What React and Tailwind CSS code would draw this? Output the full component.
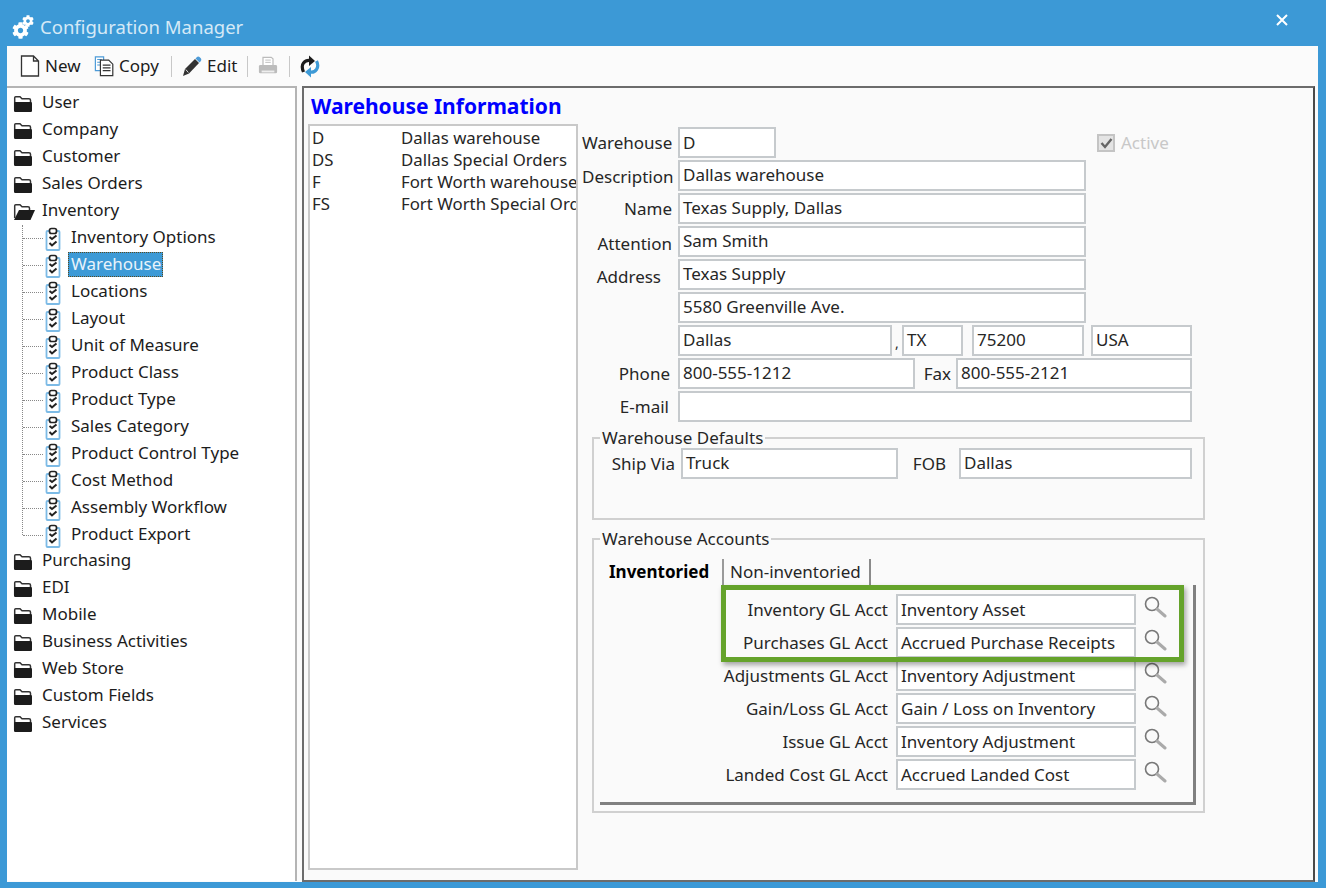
import React from "react";
import { FaCog } from "react-icons/fa";

const FolderIcon = () => (
    <svg width="20" height="18" viewBox="0 0 20 18" className="shrink-0">
        <path d="M1.700 15V2.800q0-1 1-1h4.300l2 2h7q1.500 0 1.500 1.500V8" fill="#fff" stroke="#333" strokeWidth="1.500" />
        <rect x="1" y="7" width="18" height="10" rx="1.200" fill="#1c1c1c" />
    </svg>
)

const FolderOpenIcon = () => (
    <svg width="23" height="18" viewBox="0 0 23 18" className="shrink-0">
        <path d="M1.700 15V2.800q0-1 1-1h4.300l2 2h6q1.500 0 1.500 1.500V8" fill="#fff" stroke="#333" strokeWidth="1.500" />
        <path d="M6 7h16l-4.500 10H1z" fill="#1c1c1c" />
    </svg>
)

const TaskIcon = () => (
    <svg width="16" height="24" viewBox="0 0 16 24" className="shrink-0">
        <rect x="1.500" y="4" width="13" height="19" rx="1" fill="#fff" stroke="#7dbbe6" strokeWidth="1.800" />
        <rect x="4.500" y="1.500" width="7" height="5" rx="2" fill="#fff" stroke="#222" strokeWidth="1.700" />
        <path d="M4.500 10l2.500 2 4.500-3.500M4.500 16l2.500 2.500 4.500-4" fill="none" stroke="#222" strokeWidth="2" />
    </svg>
)

const SearchIcon = () => (
    <svg width="24" height="24" viewBox="0 0 24 24">
        <circle cx="9" cy="9" r="6.500" fill="none" stroke="#777" strokeWidth="1.600" />
        <path d="M14 14l8 7" stroke="#aaa" strokeWidth="3" strokeLinecap="round" />
    </svg>
)

const Sep = () => <span className="block w-px h-[21px] bg-[#c8c8c8]"></span>

const Toolbar = () => (
    <div className="h-10 flex items-center pl-[13px] text-[17px] text-[#1c1c1c]">
        <svg width="20" height="22" viewBox="0 0 20 22">
            <path d="M1.500 1h12l5 5v15h-17zM13.500 1v5h5" fill="#fff" stroke="#333" strokeWidth="1.300" />
        </svg>
        <span className="ml-[5px] w-[36px]">New</span>
        <svg width="22" height="22" viewBox="0 0 24 22" className="ml-[13px]">
            <path d="M1.500 1h9v15h-9z" fill="#fff" stroke="#4d9bd8" strokeWidth="1.300" />
            <path d="M3.500 4h5M3.500 7h5M3.500 10h5" stroke="#4d9bd8" strokeWidth="1.100" />
            <path d="M7 4.500h9l4.500 4.500v12.500H7z" fill="#fff" stroke="#333" strokeWidth="1.300" />
            <path d="M9.500 10h8.500M9.500 13h8.500M9.500 16h8.500" stroke="#333" strokeWidth="1.300" />
        </svg>
        <span className="ml-[3px] w-[41px]">Copy</span>
        <span className="ml-[11px] mr-[10px]"><Sep /></span>
        <svg width="21" height="22" viewBox="0 0 21 22">
            <path d="M1 21l2-7L13 4l4 4L7 18.500z" fill="#333" />
            <path d="M14.500 2.500q1.500-1.500 3-.5l1.500 1.500q1 1.500-.5 3L17.500 7.500l-4-4z" fill="#4d9bd8" />
            <path d="M3.800 14.500l2.500 3" stroke="#ddd" strokeWidth="1" />
        </svg>
        <span className="ml-[4px] w-[30px]">Edit</span>
        <span className="ml-[10px] mr-[10px]"><Sep /></span>
        <svg width="20" height="22" viewBox="0 0 22 22">
            <path d="M5.500 10V1.500h9L16.500 3v7" fill="#fff" stroke="#bbb" strokeWidth="1.300" />
            <path d="M8 4.500h6M8 7h6" stroke="#bbb" />
            <rect x="1" y="10" width="20" height="9" rx="1.500" fill="#bcbcbc" />
            <rect x="4" y="16" width="14" height="2" fill="#eee" />
        </svg>
        <span className="ml-[11px] mr-[10px]"><Sep /></span>
        <svg width="20" height="23" viewBox="0 0 20 23">
            <path d="M3.500 17Q1 11 3.500 8T10 5.500" fill="none" stroke="#1c1c1c" strokeWidth="3.200" />
            <path d="M9 0.500l6 5.500-6 5z" fill="#1c1c1c" />
            <path d="M16.500 6q2.500 5 0 8.500T10 17" fill="none" stroke="#3d9ad6" strokeWidth="3.200" />
            <path d="M11 22.500L5 17l6-5z" fill="#3d9ad6" />
        </svg>
    </div>
)

const TreeFolder = ({ label, open }) => (
    <div className="h-[27px] flex items-center pl-[6px]">
        {open ? <FolderOpenIcon /> : <FolderIcon />}
        <span className={open ? 'ml-[6px] mb-[3px]' : 'ml-[9px] mb-[3px]'}>{label}</span>
    </div>
)

const TreeChild = ({ label, selected }) => (
    <div className="h-[27px] flex items-center">
        <span className="w-[20px] border-t border-dotted border-[#888]"></span>
        <span className="ml-[2px]"><TaskIcon /></span>
        {selected ?
            <span className="ml-[7px] pl-[2px] pr-[1px] pb-[2px] h-[25px] flex items-center bg-[#3d9ad6] text-[#e8f3fb] border border-dotted border-[#5a4a20] mb-[2px]">{label}</span>
            :
            <span className="ml-[10px] mb-[3px]">{label}</span>
        }
    </div>
)

const Tree = () => (
    <div className="w-[290px] h-[795px] shrink-0 border-2 border-[#b4b4b4] border-l-0 border-b-0 bg-white text-[17px] text-[#1c1c1c] pt-[2px] overflow-hidden">
        {['User', 'Company', 'Customer', 'Sales Orders'].map(f => <TreeFolder key={f} label={f} />)}
        <TreeFolder label="Inventory" open />
        <div className="ml-[15px] border-l border-dotted border-[#888] mb-[13px] h-[310px]">
            <TreeChild label="Inventory Options" />
            <TreeChild label="Warehouse" selected />
            {['Locations', 'Layout', 'Unit of Measure', 'Product Class', 'Product Type', 'Sales Category', 'Product Control Type', 'Cost Method', 'Assembly Workflow', 'Product Export'].map(c => <TreeChild key={c} label={c} />)}
        </div>
        {['Purchasing', 'EDI', 'Mobile', 'Business Activities', 'Web Store', 'Custom Fields', 'Services'].map(f => <TreeFolder key={f} label={f} />)}
    </div>
)

const Input = ({ value, w, ml = 'ml-0', up }) => (
    <div className={`${w} ${ml} ${up ? 'pb-[2px]' : ''} h-[31px] shrink-0 border-2 border-[#c6cacd] bg-white pl-[3px] flex items-center overflow-hidden whitespace-nowrap`}>{value}</div>
)

const Label = ({ children, pr = 'pr-[6px]', mt = 'mt-0' }) => (
    <div className={`w-[96px] shrink-0 text-right ${pr} ${mt}`}>{children}</div>
)

const Row = ({ label, pr, mt, children }) => (
    <div className="flex items-center h-[31px]">
        <Label pr={pr} mt={mt}>{label}</Label>
        {children}
    </div>
)

const accounts = [
    ['Inventory GL Acct', 'Inventory Asset'],
    ['Purchases GL Acct', 'Accrued Purchase Receipts'],
    ['Adjustments GL Acct', 'Inventory Adjustment'],
    ['Gain/Loss GL Acct', 'Gain / Loss on Inventory'],
    ['Issue GL Acct', 'Inventory Adjustment'],
    ['Landed Cost GL Acct', 'Accrued Landed Cost'],
]

const Form = () => (
    <div className="w-[623px] shrink-0 text-[17px] text-[#262626] ml-[4px] pt-[3px]">
        <div className="flex flex-col gap-[2px]">
            <div className="flex items-center h-[31px]">
                <Label>Warehouse</Label>
                <Input value="D" w="w-[98px]" />
                <div className="ml-[321px] w-[18px] h-[18px] border-2 border-[#c4c4c4] bg-[#e4e4e4] flex items-center justify-center">
                    <svg width="13" height="12" viewBox="0 0 13 12"><path d="M1.500 6l3.500 4 6.500-8" fill="none" stroke="#666" strokeWidth="2.400" /></svg>
                </div>
                <span className="ml-[6px] text-[#c8c8c8]">Active</span>
            </div>
            <Row label="Description" mt="mt-[3px]"><Input up value="Dallas warehouse" w="w-[408px]" /></Row>
            <Row label="Name"><Input up value="Texas Supply, Dallas" w="w-[408px]" /></Row>
            <Row label="Attention" mt="mt-[5px]"><Input up value="Sam Smith" w="w-[408px]" /></Row>
            <Row label="Address" pr="pr-[17px]" mt="mt-[5px]"><Input up value="Texas Supply" w="w-[408px]" /></Row>
            <Row label=""><Input up value="5580 Greenville Ave." w="w-[408px]" /></Row>
            <Row label="">
                <Input up value="Dallas" w="w-[214px]" />
                <span className="w-[10px] text-center text-[14px] mt-[4px]">,</span>
                <Input up value="TX" w="w-[61px]" />
                <Input up value="75200" w="w-[112px]" ml="ml-[9px]" />
                <Input up value="USA" w="w-[101px]" ml="ml-[7px]" />
            </Row>
            <Row label="Phone" pr="pr-[8px]" mt="mt-[1px]">
                <Input up value="800-555-1212" w="w-[237px]" />
                <span className="w-[41px] pr-[5px] text-right">Fax</span>
                <Input up value="800-555-2121" w="w-[236px]" />
            </Row>
            <Row label="E-mail" pr="pr-[9px]" mt="mt-[1px]"><Input value="" w="w-[514px]" /></Row>
        </div>
        <fieldset className="ml-[10px] w-[613px] h-[93px] mt-[5px] border-2 border-[#d0d0d0]">
            <legend className="ml-[6px] px-[2px] leading-[22px]">Warehouse Defaults</legend>
            <div className="flex items-center mt-[-1px]">
                <span className="w-[87px] pr-[6px] text-right">Ship Via</span>
                <Input up value="Truck" w="w-[217px]" />
                <span className="w-[61px] pr-[13px] text-right">FOB</span>
                <Input up value="Dallas" w="w-[233px]" />
            </div>
        </fieldset>
        <fieldset className="ml-[10px] w-[613px] h-[285px] mt-[8px] border-2 border-[#d0d0d0]">
            <legend className="ml-[6px] px-[2px] leading-[22px]">Warehouse Accounts</legend>
            <div className="flex items-end h-[36px] mt-[-1px]">
                <span className="font-bold pl-[15px] w-[128px] h-[30px] leading-[34px] text-black">Inventoried</span>
                <span className="w-[149px] h-[26px] pl-[6px] leading-[26px] border-l-2 border-r-2 border-l-[#9a9a9a] border-r-[#8a8a8a] whitespace-nowrap">Non-inventoried</span>
            </div>
            <div className="ml-[6px] w-[596px] h-[220px] border-r-[3px] border-b-[3px] border-[#808080] pt-[9px] pb-[7px] flex flex-col gap-[2px]">
                {accounts.map(([label, value]) => (
                    <div key={label} className="flex items-center h-[31px]">
                        <span className="w-[288px] shrink-0 text-right">{label}</span>
                        <Input value={value} w="w-[240px]" ml="ml-[8px]" />
                        <span className="ml-[7px] mt-[-5px]"><SearchIcon /></span>
                    </div>
                ))}
            </div>
        </fieldset>
    </div>
)

const Details = () => (
    <div className="relative flex-1 border-2 border-[#6c6c6c] border-r-[#4a4a4a] bg-[#fafafa] pl-[4px] overflow-hidden">
        <div className="h-[36px] pl-[3px] flex items-center text-[21px] font-bold text-[#0000ff] leading-none">Warehouse Information</div>
        <div className="flex">
            <div className="w-[270px] h-[746px] shrink-0 border-2 border-[#c9c9c9] bg-white text-[16.800px] text-[#262626] overflow-hidden">
                {[['D', 'Dallas warehouse'], ['DS', 'Dallas Special Orders'], ['F', 'Fort Worth warehouse'], ['FS', 'Fort Worth Special Orders']].map(([code, name]) => (
                    <div key={code} className="flex h-[22.300px] items-center pl-[2px] whitespace-nowrap">
                        <span className="w-[89px] shrink-0">{code}</span>
                        <span>{name}</span>
                    </div>
                ))}
            </div>
            <Form />
        </div>
        <div className="absolute left-[417px] top-[497px] w-[463px] h-[77px] border-[5px] border-[#65a32b] shadow-[2px_3px_5px_rgba(0,0,0,0.35)]"></div>
    </div>
)

export default function App() {
    return (
        <div className="w-[1326px] h-[888px] bg-[#3c99d6] flex flex-col overflow-hidden" style={{ fontFamily: '"Noto Sans", sans-serif' }}>
            <div className="h-[46px] shrink-0 flex items-center pl-[12px] pr-[38px] pt-[8px] text-white">
                <div className="relative w-[22px] h-[24px] shrink-0">
                    <FaCog size={17} className="absolute left-0 bottom-0" />
                    <FaCog size={12} className="absolute right-0 top-0" />
                </div>
                <span className="ml-[6px] text-[18.500px] text-[#d5e9f6]">Configuration Manager</span>
                <svg width="12" height="12" viewBox="0 0 12 12" className="ml-auto mb-[14px]">
                    <path d="M1 1l10 10M11 1L1 11" stroke="#fff" strokeWidth="2" />
                </svg>
            </div>
            <div className="ml-[7px] w-[1311px] h-[836px] bg-[#fbfbfb] flex flex-col">
                <Toolbar />
                <div className="flex-1 flex gap-[5px] pr-[3px]">
                    <Tree />
                    <Details />
                </div>
            </div>
        </div>
    )
}
